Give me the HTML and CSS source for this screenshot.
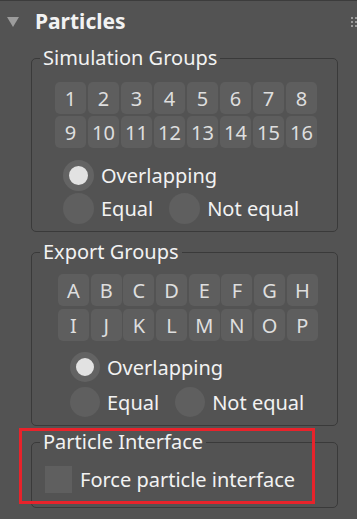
FILE: index.html
```html
<!DOCTYPE html>
<html lang="en">
  <head>
    <meta charset="UTF-8" />
    <meta name="viewport" content="width=device-width, initial-scale=1.0" />
    <title>Particles</title>
    <link rel="stylesheet" href="styles.css">
  </head>
  <body>
    <div class="panel">
      <div class="header">
        <span class="arrow"></span>
        <span class="title">Particles</span>
        <span class="grip"><i></i><i></i><i></i><i></i><i></i><i></i></span>
      </div>

      <fieldset class="group sim">
        <legend>Simulation Groups</legend>
        <div class="buttons">
          <div class="btn">1</div><div class="btn">2</div><div class="btn">3</div><div class="btn">4</div>
          <div class="btn">5</div><div class="btn">6</div><div class="btn">7</div><div class="btn">8</div>
          <div class="btn">9</div><div class="btn">10</div><div class="btn">11</div><div class="btn">12</div>
          <div class="btn">13</div><div class="btn">14</div><div class="btn">15</div><div class="btn">16</div>
        </div>
        <div class="radios">
          <div class="radio-row">
            <div class="radio checked"><span class="dot"></span>Overlapping</div>
          </div>
          <div class="radio-row">
            <div class="radio"><span class="dot"></span>Equal</div>
            <div class="radio"><span class="dot"></span>Not equal</div>
          </div>
        </div>
      </fieldset>

      <fieldset class="group exp">
        <legend>Export Groups</legend>
        <div class="buttons">
          <div class="btn">A</div><div class="btn">B</div><div class="btn">C</div><div class="btn">D</div>
          <div class="btn">E</div><div class="btn">F</div><div class="btn">G</div><div class="btn">H</div>
          <div class="btn">I</div><div class="btn">J</div><div class="btn">K</div><div class="btn">L</div>
          <div class="btn">M</div><div class="btn">N</div><div class="btn">O</div><div class="btn">P</div>
        </div>
        <div class="radios">
          <div class="radio-row">
            <div class="radio checked"><span class="dot"></span>Overlapping</div>
          </div>
          <div class="radio-row">
            <div class="radio"><span class="dot"></span>Equal</div>
            <div class="radio"><span class="dot"></span>Not equal</div>
          </div>
        </div>
      </fieldset>

      <fieldset class="group iface">
        <legend>Particle Interface</legend>
        <div class="check"><span class="box"></span>Force particle interface</div>
      </fieldset>

      <div class="highlight"></div>
    </div>
  </body>
</html>
```

FILE: styles.css
```css
body {
  margin: 0;
  background-color: #535353;
  font-family: "Noto Sans", "Open Sans", sans-serif;
  color: #f2f2f2;
  overflow: hidden;
}
.panel {
  position: relative;
  width: 357px;
  height: 519px;
  border-top: 1px solid #3c3c3c;
  box-sizing: border-box;
}
.header {
  display: flex;
  align-items: center;
  height: 45px;
  padding-left: 7px;
}
.arrow {
  width: 0;
  height: 0;
  border-left: 6px solid transparent;
  border-right: 6px solid transparent;
  border-top: 10px solid #9c9c9c;
  margin-top: -3px;
}
.title {
  margin-left: 16px;
  font-size: 21px;
  font-weight: bold;
  margin-top: -5px;
}
.grip {
  margin-left: auto;
  margin-top: -4px;
  display: grid;
  grid-template-columns: repeat(2, 2px);
  gap: 2px;
}
.grip i {
  display: block;
  width: 2px;
  height: 2px;
  background-color: #9a9a9a;
}
.group {
  margin: 0 0 0 31px;
  width: 307px;
  box-sizing: border-box;
  border: 1px solid #3a3a3a;
  border-radius: 5px;
  padding: 0;
  min-width: 0;
}
.group legend {
  margin-left: 8px;
  padding: 0 3px;
  font-size: 20px;
  line-height: 24px;
}
.buttons {
  display: grid;
  grid-template-columns: repeat(8, 31px);
  grid-auto-rows: 32px;
}
.btn {
  display: flex;
  justify-content: center;
  align-items: center;
  background-color: #5e5e5e;
  border-radius: 5px;
  color: #dedede;
  font-size: 20px;
}
.radios {
  display: flex;
  flex-direction: column;
}
.radio-row {
  display: flex;
  gap: 16px;
}
.radio {
  display: flex;
  align-items: center;
  gap: 7px;
  font-size: 20px;
}
.dot {
  width: 31px;
  height: 31px;
  border-radius: 50%;
  background-color: #5f5f5f;
  box-sizing: border-box;
}
.radio.checked .dot {
  background-color: #e2e2e2;
  border: 6px solid #636363;
}
.sim {
  padding: 12px 0 7px 0;
}
.sim .buttons {
  margin-left: 23px;
  column-gap: 2px;
  row-gap: 2px;
}
.sim .radios {
  margin: 12px 0 0 31px;
  gap: 2px;
}
.exp {
  margin-top: 8px;
  padding: 10px 0 8px 0;
}
.exp .buttons {
  margin-left: 26px;
  column-gap: 1.7px;
  row-gap: 3px;
}
.exp .radios {
  margin: 11px 0 0 38px;
  gap: 5px;
}
.exp .dot {
  width: 30px;
  height: 30px;
}
.iface {
  margin-top: 4px;
  padding: 12px 0 14px 0;
}
.check {
  display: flex;
  align-items: center;
  gap: 8px;
  margin-left: 13px;
  font-size: 20px;
}
.box {
  width: 27px;
  height: 27px;
  background-color: #5f5f5f;
}
.highlight {
  position: absolute;
  left: 19px;
  top: 427px;
  width: 296px;
  height: 76px;
  border: 3px solid #e8232b;
  box-sizing: border-box;
}
```
